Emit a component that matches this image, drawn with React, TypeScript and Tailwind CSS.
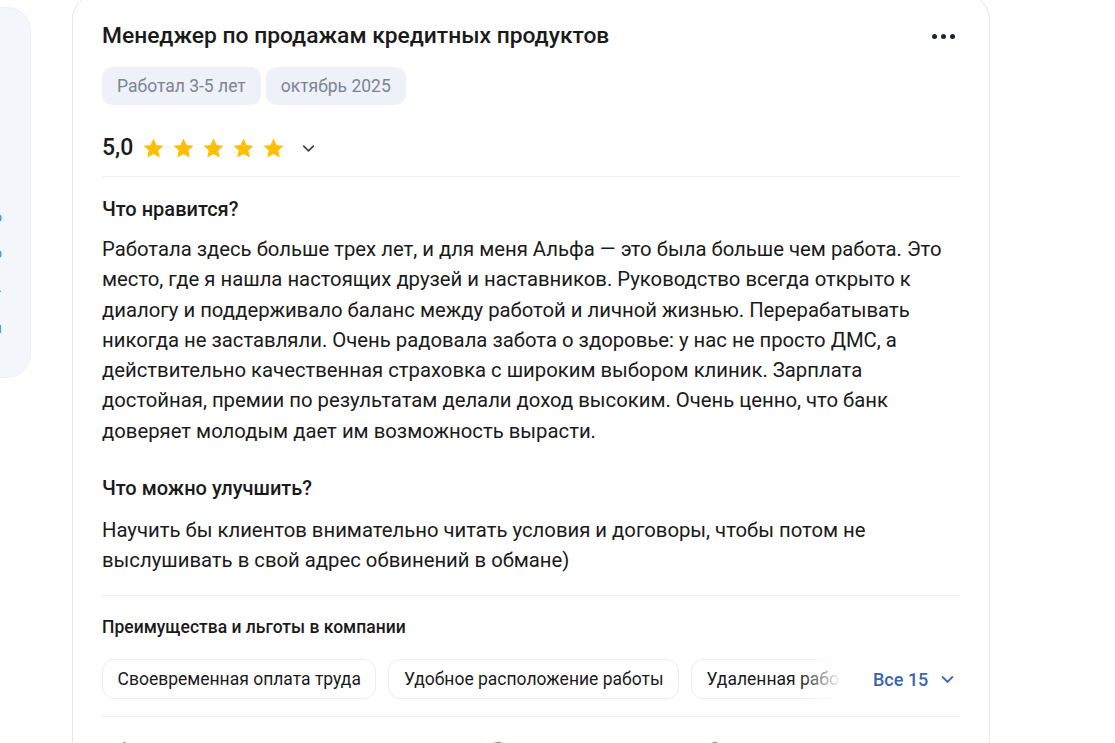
import { ChevronDown, ThumbsUp, MessageCircle, Share2 } from "lucide-react";

const LIKES =
  "Работала здесь больше трех лет, и для меня Альфа — это была больше чем работа. Это место, где я нашла настоящих друзей и наставников. Руководство всегда открыто к диалогу и поддерживало баланс между работой и личной жизнью. Перерабатывать никогда не заставляли. Очень радовала забота о здоровье: у нас не просто ДМС, а действительно качественная страховка с широким выбором клиник. Зарплата достойная, премии по результатам делали доход высоким. Очень ценно, что банк доверяет молодым дает им возможность вырасти.";

const IMPROVE =
  "Научить бы клиентов внимательно читать условия и договоры, чтобы потом не выслушивать в свой адрес обвинений в обмане)";

const BENEFITS = ["Своевременная оплата труда", "Удобное расположение работы", "Удаленная работа"];

function Star() {
  return (
    <svg width="23" height="23" viewBox="0 0 24 24">
      <path
        d="M12 1.6l3.1 6.7 7.3.8-5.4 5 1.5 7.2L12 17.7l-6.5 3.6 1.5-7.2-5.4-5 7.3-.8z"
        fill="#fdbf00"
      />
    </svg>
  );
}

export default function App() {
  return (
    <div
      className="h-screen bg-white overflow-hidden flex items-start text-[#1a1a1a]"
      style={{ fontFamily: "Roboto, 'Noto Sans', sans-serif" }}
    >
      {/* левая панель, обрезанная краем окна */}
      <div className="-ml-[209px] mt-[7px] w-[240px] h-[371px] shrink-0 rounded-[24px] bg-[#f3f6fb] border border-[#edf0f6] overflow-hidden">
        <div className="flex flex-col items-end pr-[28px] pt-[198px] text-[15px] text-[#4a86e0] leading-[22px]">
          <span>Все о</span>
          <span className="mt-[14px]">Отзыво</span>
          <span className="mt-[12px]">Фото.</span>
          <span className="mt-[19px]">Вакансии</span>
        </div>
      </div>

      <div className="ml-[41px] -mt-[5px] w-[918px] shrink-0 rounded-[24px] border border-[#e2e6ee] bg-white px-[29px] pt-[25px]">
        <div className="flex items-start justify-between">
          <h2 className="text-[22.8px] font-medium leading-[30px]">
            Менеджер по продажам кредитных продуктов
          </h2>
          <div className="flex gap-[4px] mt-[13px] mr-[5px]">
            <span className="w-[5px] h-[5px] rounded-full bg-[#1f2330]" />
            <span className="w-[5px] h-[5px] rounded-full bg-[#1f2330]" />
            <span className="w-[5px] h-[5px] rounded-full bg-[#1f2330]" />
          </div>
        </div>

        <div className="flex gap-[5px] mt-[16px]">
          <span className="h-[38px] px-[15px] flex items-center rounded-[10px] bg-[#eef1f8] text-[17.5px] text-[#7b8494]">
            Работал 3-5 лет
          </span>
          <span className="h-[38px] px-[15px] flex items-center rounded-[10px] bg-[#eef1f8] text-[17.5px] text-[#7b8494]">
            октябрь 2025
          </span>
        </div>

        <div className="flex items-center mt-[23px] h-[40px]">
          <span className="text-[23px] font-medium mr-[9px]">5,0</span>
          <div className="flex gap-[7px]">
            <Star />
            <Star />
            <Star />
            <Star />
            <Star />
          </div>
          <ChevronDown className="ml-[14px] text-[#444]" size={19} strokeWidth={2.2} />
        </div>

        <div className="border-t border-[#eef0f5] mt-[8px]" />

        <h3 className="text-[20px] font-medium mt-[19px] leading-[26px]">Что нравится?</h3>
        <p className="text-[20.3px] leading-[30.3px] mt-[12px]">{LIKES}</p>

        <h3 className="text-[20px] font-medium mt-[29px] leading-[26px]">Что можно улучшить?</h3>
        <p className="text-[20.3px] leading-[30px] mt-[14px]">{IMPROVE}</p>

        <div className="border-t border-[#eef0f5] mt-[20px]" />

        <h3 className="text-[17.5px] font-medium mt-[19px] leading-[24px]">
          Преимущества и льготы в компании
        </h3>

        <div className="flex items-center mt-[20px]">
          <div className="relative flex gap-[12px] w-[740px] overflow-hidden">
            {BENEFITS.map((b) => (
              <span
                key={b}
                className="h-[40px] shrink-0 px-[14.5px] flex items-center rounded-[12px] border border-[#eaedf3] text-[17.5px] whitespace-nowrap"
              >
                {b}
              </span>
            ))}
            <div className="absolute right-0 top-0 h-full w-[42px] bg-gradient-to-r from-white/0 to-white" />
          </div>
          <button className="ml-[31px] flex items-center gap-[10px] text-[18px] font-medium text-[#3a64ad]">
            Все 15
            <ChevronDown size={19} strokeWidth={2.6} />
          </button>
        </div>

        <div className="border-t border-[#eef0f5] mt-[17px]" />

        <div className="flex items-start mt-[24px] pl-[12px] text-[#7d9fd9]">
          <ThumbsUp size={20} />
          <MessageCircle size={20} className="ml-[354px]" />
          <Share2 size={20} className="ml-[192px]" />
        </div>
        <div className="h-[40px]" />
      </div>
    </div>
  );
}
